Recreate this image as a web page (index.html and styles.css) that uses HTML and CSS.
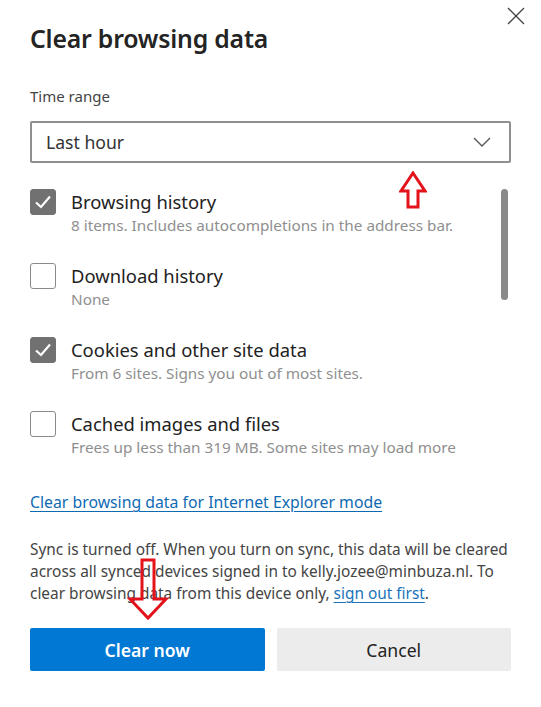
FILE: index.html
```html
<!DOCTYPE html>
<html>
	<head>
		<meta charset="UTF-8">
		<title>Clear browsing data</title>
		<link rel="stylesheet" href="styles.css">
	</head>
	<body>
		<div class="dialog">
			<a href="javascript:;" class="close">
				<svg width="18" height="18" viewBox="0 0 18 18"><path d="M1 1L17 17M17 1L1 17" stroke="#444" stroke-width="1.3" fill="none"/></svg>
			</a>
			<h1>Clear browsing data</h1>
			<div class="label">Time range</div>
			<div class="select">
				<span>Last hour</span>
				<svg width="18" height="10" viewBox="0 0 18 10"><path d="M1 1L9 9L17 1" stroke="#555" stroke-width="1.3" fill="none"/></svg>
			</div>
			<div class="marker-up">
				<svg width="28" height="38" viewBox="0 0 28 38"><path d="M14 2L26 20H19V36H9V20H2Z" stroke="#e3131b" stroke-width="3" fill="#fff" stroke-linejoin="miter"/></svg>
			</div>
			<div class="options">
				<ul class="list">
					<li>
						<span class="box on"><svg width="18" height="16" viewBox="0 0 18 16"><path d="M2 8.5L7 13L16 2.5" stroke="#fff" stroke-width="2.2" fill="none"/></svg></span>
						<div class="text">
							<div class="name">Browsing history</div>
							<div class="desc">8 items. Includes autocompletions in the address bar.</div>
						</div>
					</li>
					<li>
						<span class="box"></span>
						<div class="text">
							<div class="name">Download history</div>
							<div class="desc">None</div>
						</div>
					</li>
					<li>
						<span class="box on"><svg width="18" height="16" viewBox="0 0 18 16"><path d="M2 8.5L7 13L16 2.5" stroke="#fff" stroke-width="2.2" fill="none"/></svg></span>
						<div class="text">
							<div class="name">Cookies and other site data</div>
							<div class="desc">From 6 sites. Signs you out of most sites.</div>
						</div>
					</li>
					<li>
						<span class="box"></span>
						<div class="text">
							<div class="name">Cached images and files</div>
							<div class="desc">Frees up less than 319 MB. Some sites may load more</div>
						</div>
					</li>
				</ul>
				<div class="scroll"><div class="thumb"></div></div>
			</div>
			<a href="javascript:;" class="ie-link">Clear browsing data for Internet Explorer mode</a>
			<p class="sync">Sync is turned off. When you turn on sync, this data will be cleared across all synced devices signed in to kelly.jozee@minbuza.nl. To clear browsing data from this device only, <a href="javascript:;">sign out first</a>.</p>
			<div class="marker-down">
				<svg width="44" height="66" viewBox="0 0 44 66"><path d="M16 2H28V41H40L22 60L4 41H16Z" stroke="#e3131b" stroke-width="3" fill="none"/></svg>
			</div>
			<div class="buttons">
				<button class="btn primary">Clear now</button>
				<button class="btn">Cancel</button>
			</div>
		</div>
	</body>
</html>
```

FILE: styles.css
```css
*{margin: 0;padding: 0;box-sizing: border-box;}
body{background: #fff;font-family: "Noto Sans", "Open Sans", sans-serif;color: #1b1b1b;}
li{list-style: none;}
.dialog{width: 541px;height: 707px;padding: 21px 30px 0;position: relative;}
.close{position: absolute;top: 7px;right: 16px;display: block;width: 18px;height: 18px;}
.close svg{display: block;}
h1{font-size: 24.8px;font-weight: 600;line-height: 34px;color: #242424;letter-spacing: -0.2px;}
.label{margin-top: 31px;font-size: 15px;line-height: 20px;color: #444;}
.select{margin-top: 15px;height: 42px;border: 2px solid #8f8f8f;border-radius: 2px;display: flex;align-items: center;justify-content: space-between;padding: 0 18px 0 14px;font-size: 17.6px;color: #333;}
.marker-up{position: absolute;left: 399px;top: 171px;}
.marker-up svg, .marker-down svg{display: block;}
.marker-down{position: absolute;left: 126px;top: 558px;}
.options{margin-top: 26px;display: flex;height: 288px;}
.list{flex: 1;}
.list li{display: flex;height: 74px;}
.box{width: 26px;height: 26px;border: 1px solid #8a8a8a;border-radius: 3px;display: flex;align-items: center;justify-content: center;flex-shrink: 0;}
.box.on{background: #717171;border-color: #717171;}
.text{margin-left: 15px;}
.name{font-size: 18.4px;line-height: 26px;color: #222;margin-top: 0;}
.desc{font-size: 15.3px;line-height: 21px;color: #8f8f8f;}
.scroll{width: 7px;margin-right: 3px;}
.thumb{height: 111px;background: #8a8a8a;border-radius: 4px;}
.ie-link{display: inline-block;margin-top: 14px;font-size: 15.8px;line-height: 22px;color: #0f6ab4;text-decoration: underline;text-decoration-thickness: 1px;text-underline-offset: 3px;}
.sync{margin-top: 26px;font-size: 15.4px;line-height: 22px;color: #444;}
.sync a{color: #1a73b9;text-underline-offset: 3px;}
.buttons{margin-top: 23px;display: flex;gap: 12px;}
.btn{flex: 1;height: 43px;border: none;border-radius: 2px;background: #ececec;font-family: inherit;font-size: 17.6px;color: #222;}
.btn.primary{background: #0078d4;color: #fff;font-weight: 600;}
```
